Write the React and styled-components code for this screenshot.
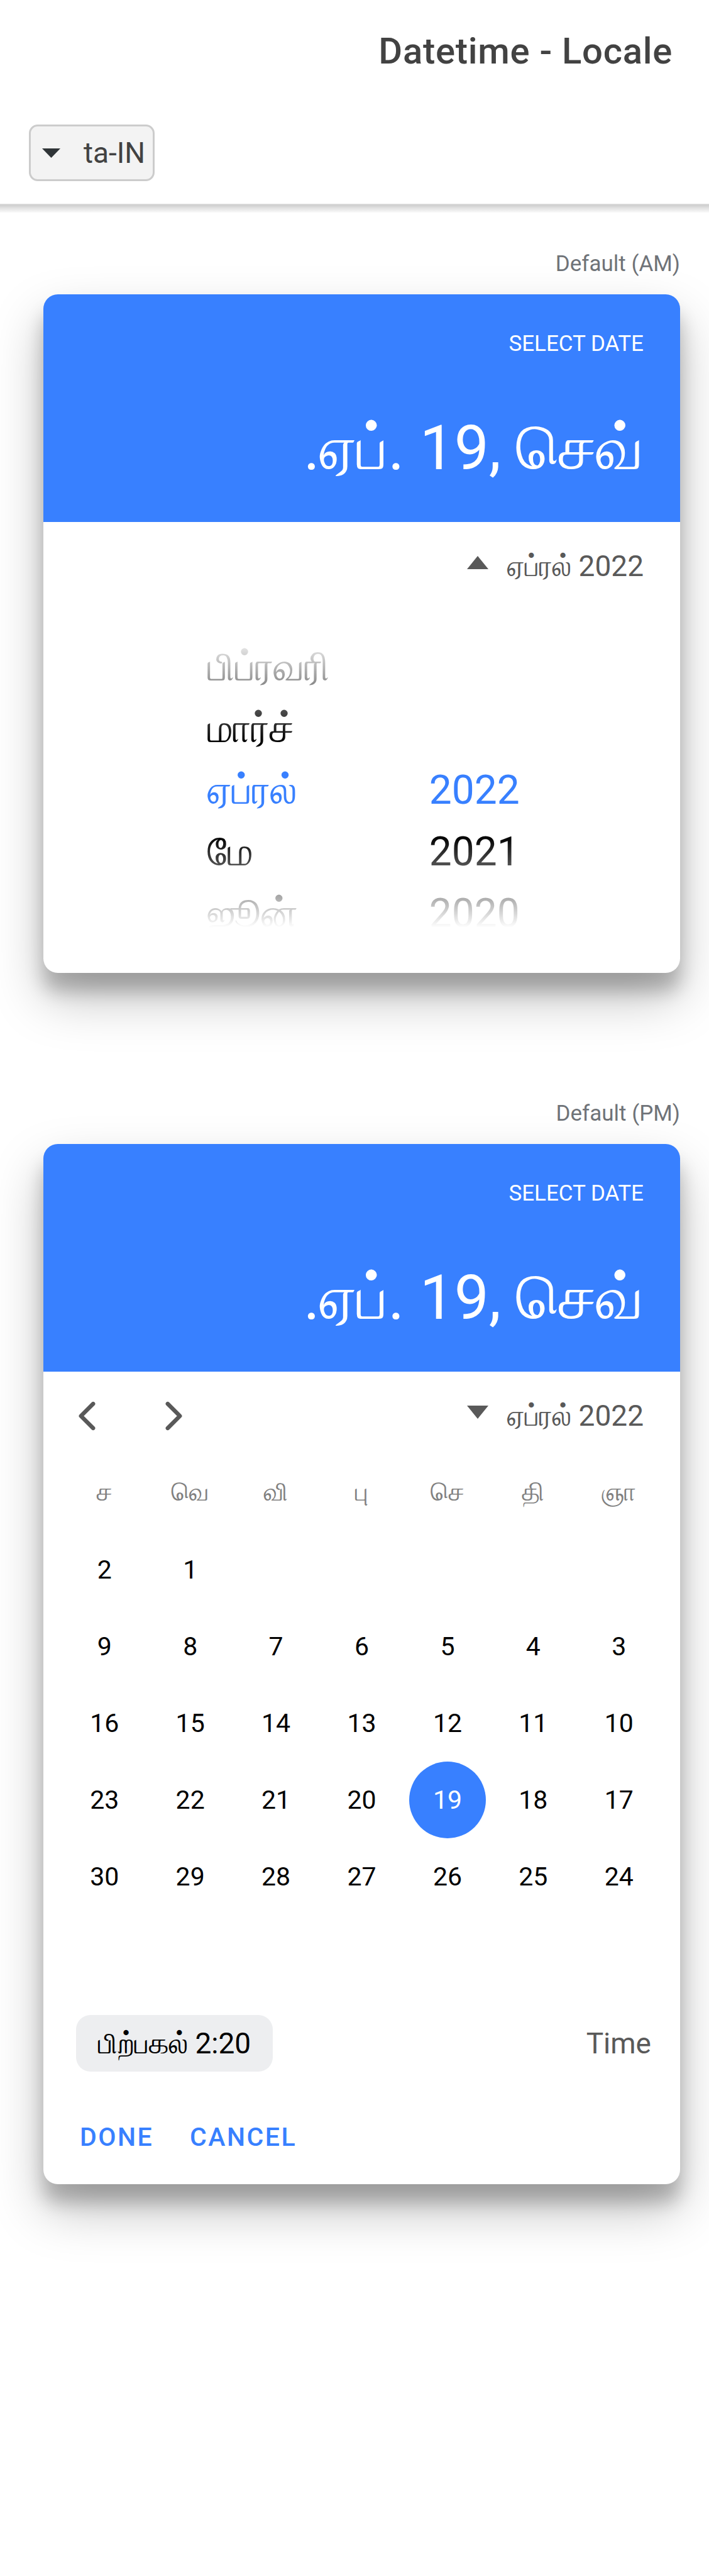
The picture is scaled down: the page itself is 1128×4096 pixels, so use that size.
import React from 'react';
import styled, { createGlobalStyle, css } from 'styled-components';

const GlobalStyle = createGlobalStyle`
  *, *::before, *::after { box-sizing: border-box; }
  body {
    margin: 0;
    background: #fff;
    color: #000;
    font-family: Roboto, FreeSerif, sans-serif;
    -webkit-font-smoothing: antialiased;
  }
  button, select { font: inherit; color: inherit; }
`;

const blue = '#3880ff';
const grey = '#595959';

const plainButton = css`
  margin: 0;
  padding: 0;
  border: 0;
  background: transparent;
  cursor: pointer;
`;

const Page = styled.div`
  min-height: 100vh;
  direction: rtl;
  overflow: hidden;
`;

const Header = styled.header`
  display: flex;
  flex-direction: column;
`;

const Toolbar = styled.div`
  display: flex;
  align-items: center;
  justify-content: ${(p) => (p.$end ? 'flex-end' : 'flex-start')};
  height: 162px;
  padding: 0 ${(p) => (p.$end ? '46px' : '58px')};
`;

const Title = styled.h1`
  margin: 0;
  font-size: 58px;
  line-height: 72px;
  font-weight: 500;
  letter-spacing: 0.0125em;
  color: #424242;
`;

const SelectBox = styled.div`
  display: grid;
  align-items: center;
  width: 200px;
  height: 90px;
  color: #424242;

  > * { grid-area: 1 / 1; }
  > svg { justify-self: end; margin-left: 21px; pointer-events: none; }
`;

const LocaleSelect = styled.select`
  appearance: none;
  width: 100%;
  height: 100%;
  margin: 0;
  padding: 0 12px 0 60px;
  border: 3px solid #ccc;
  border-radius: 14px;
  background: #f3f3f3;
  font-size: 46px;
  direction: rtl;
  text-align: right;
`;

const HeaderShadow = styled.div`
  height: 14px;
  background: linear-gradient(#dcdcdc 1px, #cecece 2px, #e2e2e2 50%, #fafafa);
`;

const Content = styled.main`
  display: flex;
  flex-direction: column;
  gap: 203px;
  padding: 61px 46px 0 69px;
`;

const Example = styled.section`
  display: flex;
  flex-direction: column;
  gap: 27px;
`;

const Caption = styled.h2`
  margin: 0;
  font-size: 35px;
  line-height: 42px;
  font-weight: 400;
  color: #6f7378;
`;

const Card = styled.article`
  border-radius: 23px;
  background: #fff;
  box-shadow: 0 40px 81px rgba(0, 0, 0, 0.25), 0 29px 29px rgba(0, 0, 0, 0.22);
`;

const CardHeader = styled.header`
  display: flex;
  flex-direction: column;
  justify-content: space-between;
  height: 362px;
  padding: 59px 58px;
  border-radius: 23px 23px 0 0;
  background: ${blue};
  color: #fff;
`;

const Overline = styled.div`
  font-size: 35px;
  line-height: 40px;
  text-transform: uppercase;
`;

const SelectedDate = styled.div`
  font-size: 98px;
  line-height: 116px;
`;

const NavRow = styled.div`
  display: flex;
  align-items: center;
  justify-content: space-between;
  height: 140px;
  padding-right: 58px;
  color: ${grey};
`;

const MonthToggle = styled.button`
  ${plainButton}
  display: flex;
  align-items: center;
  gap: 30px;
  font-size: 46px;
  line-height: 54px;

  > svg { margin-bottom: 12px; }
`;

const Arrows = styled.div`
  display: flex;
  direction: ltr;
`;

const ArrowButton = styled.button`
  ${plainButton}
  display: flex;
  align-items: center;
  justify-content: center;
  width: 138px;
  height: 92px;
`;

const Wheels = styled.div`
  display: flex;
  justify-content: center;
  direction: ltr;
  gap: 158px;
  height: 463px;
  margin-top: 42px;
  padding-left: 6px;
  overflow: hidden;
  mask-image: linear-gradient(transparent, #000 168px, #000 318px, transparent 463px);
`;

const WheelBody = styled.div`
  padding-bottom: 72px;
`;

const Wheel = styled.div`
  display: flex;
  flex-direction: column;
  padding-top: ${(p) => (p.$tail ? '196px' : '0')};
`;

const WheelItem = styled.button`
  ${plainButton}
  flex: none;
  height: 98px;
  font-size: 64px;
  line-height: 98px;
  text-align: left;
  color: ${(p) => (p.$selected ? blue : '#000')};
`;

const Weekdays = styled.div`
  display: grid;
  grid-template-columns: repeat(7, 1fr);
  margin-top: 11px;
  padding: 0 29px;
  font-size: 41px;
  line-height: 80px;
  text-align: center;
  color: #808080;
`;

const Days = styled.div`
  display: grid;
  grid-template-columns: repeat(7, 1fr);
  grid-template-rows: repeat(6, 1fr);
  justify-items: center;
  height: 729px;
  margin-top: 23px;
  padding: 0 29px;
`;

const Day = styled.button`
  ${plainButton}
  width: 122px;
  height: 122px;
  border-radius: 50%;
  font-size: 41px;
  grid-column-start: ${(p) => p.$column || 'auto'};
  background: ${(p) => (p.$selected ? blue : 'transparent')};
  color: ${(p) => (p.$selected ? '#fff' : '#000')};
`;

const TimeRow = styled.div`
  display: flex;
  align-items: center;
  justify-content: space-between;
  margin-top: 40px;
  padding: 0 46px 0 52px;
  font-size: 46px;
  line-height: 54px;
  color: ${grey};
`;

const TimeButton = styled.button`
  ${plainButton}
  height: 90px;
  padding: 0 35px;
  border-radius: 23px;
  background: #edeef0;
  color: #000;
`;

const Actions = styled.div`
  display: flex;
  justify-content: flex-end;
  gap: 12px;
  padding: 58px 35px 29px;
`;

const ActionButton = styled.button`
  ${plainButton}
  height: 92px;
  padding: 0 23px;
  font-size: 41px;
  font-weight: 500;
  letter-spacing: 0.06em;
  text-transform: uppercase;
  color: ${blue};
`;

const Triangle = ({ width, height, up, color = 'currentColor' }) => (
  <svg width={width} height={height} viewBox="0 0 10 6" preserveAspectRatio="none" aria-hidden="true">
    <path d={up ? 'M0 6 5 0l5 6z' : 'M0 0h10L5 6z'} fill={color} />
  </svg>
);

const Chevron = ({ forward }) => (
  <svg width="69" height="69" viewBox="0 0 512 512" aria-hidden="true">
    <path
      d={forward ? 'M184 112l144 144-144 144' : 'M328 112L184 256l144 144'}
      fill="none"
      stroke="currentColor"
      strokeWidth="48"
      strokeLinecap="round"
      strokeLinejoin="round"
    />
  </svg>
);

const months = ['பிப்ரவரி', 'மார்ச்', 'ஏப்ரல்', 'மே', 'ஜூன்'];
const years = ['2022', '2021', '2020'];
const weekdays = ['ஞா', 'தி', 'செ', 'பு', 'வி', 'வெ', 'ச'];
const days = Array.from({ length: 30 }, (_, i) => i + 1);

const DateHeader = () => (
  <CardHeader>
    <Overline>Select Date</Overline>
    <SelectedDate>ஏப். 19, செவ்.</SelectedDate>
  </CardHeader>
);

const MonthYear = ({ open }) => (
  <MonthToggle type="button" aria-expanded={open}>
    <span>ஏப்ரல் 2022</span>
    <Triangle width={34} height={21} up={open} />
  </MonthToggle>
);

export default function App() {
  return (
    <Page>
      <GlobalStyle />
      <Header>
        <Toolbar><Title>Datetime - Locale</Title></Toolbar>
        <Toolbar $end>
          <SelectBox>
            <LocaleSelect aria-label="Locale" defaultValue="ta-IN">
              <option value="ta-IN">ta-IN</option>
            </LocaleSelect>
            <Triangle width={29} height={15} color="#2f3437" />
          </SelectBox>
        </Toolbar>
      </Header>
      <HeaderShadow />
      <Content>
        <Example>
          <Caption>Default (AM)</Caption>
          <Card>
            <DateHeader />
            <NavRow><MonthYear open /></NavRow>
            <WheelBody>
              <Wheels>
                <Wheel>
                  {months.map((m) => (
                    <WheelItem key={m} type="button" $selected={m === 'ஏப்ரல்'}>{m}</WheelItem>
                  ))}
                </Wheel>
                <Wheel $tail>
                  {years.map((y) => (
                    <WheelItem key={y} type="button" $selected={y === '2022'}>{y}</WheelItem>
                  ))}
                </Wheel>
              </Wheels>
            </WheelBody>
          </Card>
        </Example>
        <Example>
          <Caption>Default (PM)</Caption>
          <Card>
            <DateHeader />
            <NavRow>
              <MonthYear open={false} />
              <Arrows>
                <ArrowButton type="button" aria-label="Previous month"><Chevron /></ArrowButton>
                <ArrowButton type="button" aria-label="Next month"><Chevron forward /></ArrowButton>
              </Arrows>
            </NavRow>
            <Weekdays>{weekdays.map((d) => <span key={d}>{d}</span>)}</Weekdays>
            <Days>
              {days.map((d) => (
                <Day key={d} type="button" $column={d === 1 ? 6 : undefined} $selected={d === 19}>{d}</Day>
              ))}
            </Days>
            <TimeRow>
              <span>Time</span>
              <TimeButton type="button">பிற்பகல் 2:20</TimeButton>
            </TimeRow>
            <Actions>
              <ActionButton type="button">Cancel</ActionButton>
              <ActionButton type="button">Done</ActionButton>
            </Actions>
          </Card>
        </Example>
      </Content>
    </Page>
  );
}
